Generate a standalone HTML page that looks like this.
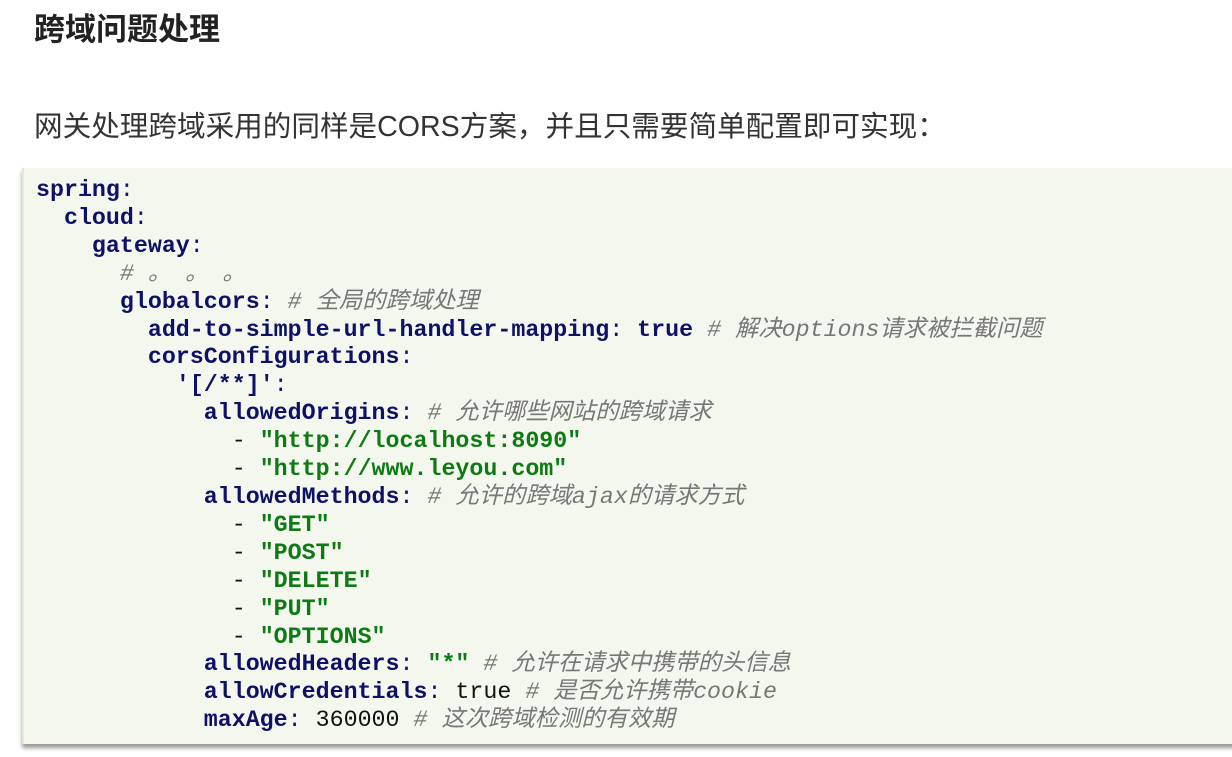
<!DOCTYPE html>
<html><head><meta charset="utf-8"><style>
body{margin:0;width:1232px;height:757px;background:#fff;overflow:hidden;font-family:"Liberation Sans","Noto Sans CJK SC",sans-serif;}
h1{position:absolute;left:34px;top:4px;margin:0;font-size:31px;font-weight:bold;color:#222;}
p{position:absolute;left:34px;top:104px;margin:0;font-size:28.6px;color:#333;white-space:nowrap;}
.code{position:absolute;left:22px;top:168px;width:1230px;height:576px;background:#f3f7ee;border-left:2px solid #e2e6dd;box-shadow:0 4px 4px #999;}
pre{margin:0;position:absolute;left:12px;top:9px;font-family:"Liberation Mono","Noto Sans CJK SC",monospace;font-size:23.3px;line-height:27.9px;color:#0f1470;}
.k{font-weight:bold;color:#0d1266}
.c{color:#777;font-style:italic}
.s{color:#0d7a13;font-weight:bold}
.v{color:#111}
</style></head><body>
<h1>跨域问题处理</h1>
<p>网关处理跨域采用的同样是CORS方案，并且只需要简单配置即可实现：</p>
<div class="code"><pre><span class="k">spring</span>:
  <span class="k">cloud</span>:
    <span class="k">gateway</span>:
      <span class="c"># 。 。 。</span>
      <span class="k">globalcors</span>: <span class="c"># 全局的跨域处理</span>
        <span class="k">add-to-simple-url-handler-mapping</span>: <span class="k">true</span> <span class="c"># 解决options请求被拦截问题</span>
        <span class="k">corsConfigurations</span>:
          <span class="k">'[/**]'</span>:
            <span class="k">allowedOrigins</span>: <span class="c"># 允许哪些网站的跨域请求</span>
              <span class="v">-</span> <span class="s">"http://localhost:8090"</span>
              <span class="v">-</span> <span class="s">"http://www.leyou.com"</span>
            <span class="k">allowedMethods</span>: <span class="c"># 允许的跨域ajax的请求方式</span>
              <span class="v">-</span> <span class="s">"GET"</span>
              <span class="v">-</span> <span class="s">"POST"</span>
              <span class="v">-</span> <span class="s">"DELETE"</span>
              <span class="v">-</span> <span class="s">"PUT"</span>
              <span class="v">-</span> <span class="s">"OPTIONS"</span>
            <span class="k">allowedHeaders</span>: <span class="s">"*"</span> <span class="c"># 允许在请求中携带的头信息</span>
            <span class="k">allowCredentials</span>: <span class="v">true</span> <span class="c"># 是否允许携带cookie</span>
            <span class="k">maxAge</span>: <span class="v">360000</span> <span class="c"># 这次跨域检测的有效期</span></pre></div>
</body></html>
